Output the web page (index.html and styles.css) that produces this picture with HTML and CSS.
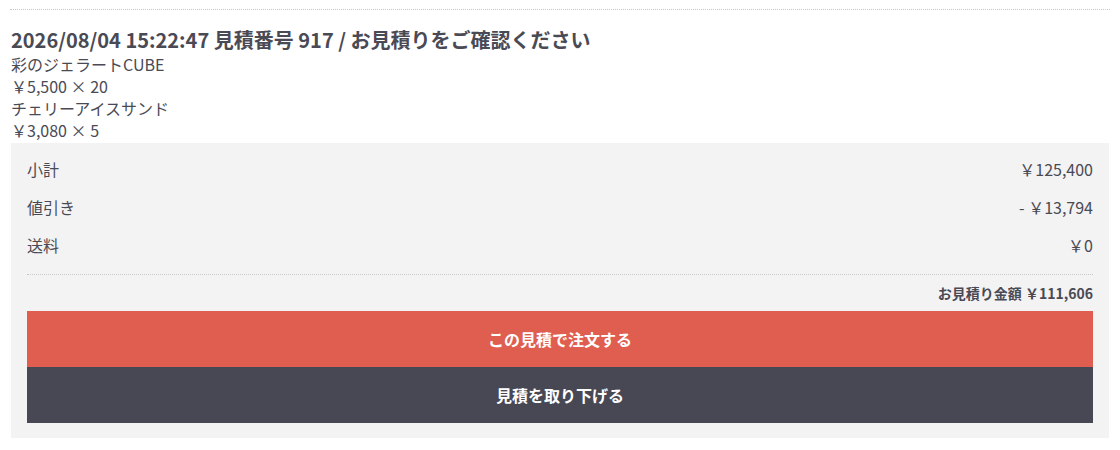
FILE: index.html
```html
<!DOCTYPE html>
<html lang="ja">
<head>
    <meta charset="UTF-8">
    <meta name="viewport" content="width=device-width, initial-scale=1.0">
    <title>お見積り</title>
    <link rel="stylesheet" href="styles.css">
</head>
<body>
    <div class="estimate">
        <h2 class="estimate-title">2026/08/04 15:22:47 見積番号 917 / お見積りをご確認ください</h2>
        <ul class="item-list">
            <li>
                <div class="item-name">彩のジェラートCUBE</div>
                <div class="item-price">￥5,500 × 20</div>
            </li>
            <li>
                <div class="item-name">チェリーアイスサンド</div>
                <div class="item-price">￥3,080 × 5</div>
            </li>
        </ul>

        <div class="summary">
            <dl class="summary-rows">
                <div class="summary-row">
                    <dt>小計</dt>
                    <dd>￥125,400</dd>
                </div>
                <div class="summary-row">
                    <dt>値引き</dt>
                    <dd>- ￥13,794</dd>
                </div>
                <div class="summary-row">
                    <dt>送料</dt>
                    <dd>￥0</dd>
                </div>
            </dl>
            <div class="summary-total">お見積り金額 ￥111,606</div>

            <div class="actions">
                <button type="button" class="btn btn-order">この見積で注文する</button>
                <button type="button" class="btn btn-cancel">見積を取り下げる</button>
            </div>
        </div>
    </div>
</body>
</html>
```

FILE: styles.css
```css
body {
    font-family: "Noto Sans CJK JP", "Noto Sans", sans-serif;
    color: #4a4a55;
    margin: 0;
    padding: 9px 10px;
    background-color: #fff;
}

.estimate {
    border-top: 1px dotted #c8c8c8;
    padding-top: 16px;
}

.estimate-title {
    font-size: 20px;
    font-weight: bold;
    line-height: 27px;
    margin: 0;
    padding-left: 1px;
}

.item-list {
    list-style: none;
    margin: 0;
    padding: 0 0 0 1px;
    font-size: 16px;
    line-height: 22px;
}

.summary {
    margin: 2px 1px 0;
    padding: 7px 16px 15px;
    background-color: #f3f3f3;
}

.summary-rows {
    margin: 0;
    padding-bottom: 10px;
    border-bottom: 1px dotted #c8c8c8;
}

.summary-row {
    display: flex;
    justify-content: space-between;
    font-size: 16px;
    line-height: 38px;
}

.summary-row dt,
.summary-row dd {
    margin: 0;
}

.summary-total {
    text-align: right;
    font-size: 14px;
    font-weight: bold;
    line-height: 36px;
}

.actions {
    display: flex;
    flex-direction: column;
}

.btn {
    display: block;
    width: 100%;
    height: 56px;
    border: none;
    color: #fff;
    font-family: inherit;
    font-size: 16px;
    font-weight: bold;
    cursor: pointer;
}

.btn-order {
    background-color: #e05e50;
}

.btn-cancel {
    background-color: #484855;
}
```
